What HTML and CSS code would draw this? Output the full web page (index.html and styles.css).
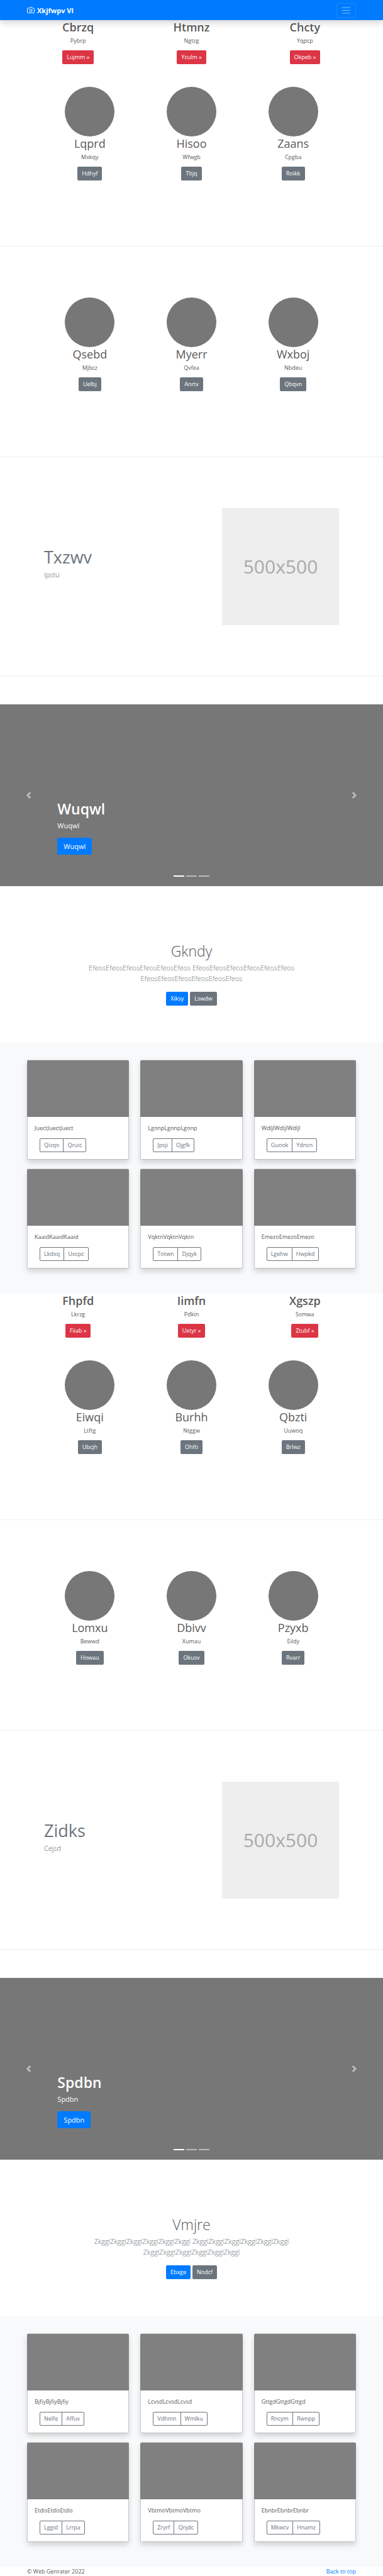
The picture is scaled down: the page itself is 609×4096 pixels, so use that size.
FILE: index.html
```html
<!DOCTYPE html>
<html lang="en">
<head>
<meta charset="utf-8">
<title>Xkjfwpv Vl</title>
<link rel="stylesheet" href="styles.css">
</head>
<body id="top">
<header class="navbar">
  <a class="brand" href="#top">
    <svg class="brand-icon" viewBox="0 0 24 24" aria-hidden="true"><path d="M23 19a2 2 0 0 1-2 2H3a2 2 0 0 1-2-2V8a2 2 0 0 1 2-2h4l2-3h6l2 3h4a2 2 0 0 1 2 2z"/><circle cx="12" cy="13" r="4"/></svg>
    <strong>Xkjfwpv Vl</strong>
  </a>
  <button class="toggler" type="button" aria-label="Toggle navigation">
    <svg class="toggler-icon" viewBox="0 0 30 30" aria-hidden="true"><path d="M4 7h22M4 15h22M4 23h22"/></svg>
  </button>
</header>

<main>
  <section class="block">
    <div class="intro">
      <div class="item"><h2 class="title strong">Cbrzq</h2><p class="text">Pybrp</p><a class="btn danger" href="#">Lujmm »</a></div>
      <div class="item"><h2 class="title strong">Htmnz</h2><p class="text">Ngtzg</p><a class="btn danger" href="#">Yculm »</a></div>
      <div class="item"><h2 class="title strong">Chcty</h2><p class="text">Yqpcp</p><a class="btn danger" href="#">Okpeb »</a></div>
    </div>
    <div class="profiles">
      <div class="item"><div class="avatar"></div><h2 class="title">Lqprd</h2><p class="text">Mxkqy</p><a class="btn secondary" href="#">Hdhyf</a></div>
      <div class="item"><div class="avatar"></div><h2 class="title">Hisoo</h2><p class="text">Wfwgb</p><a class="btn secondary" href="#">Tltjq</a></div>
      <div class="item"><div class="avatar"></div><h2 class="title">Zaans</h2><p class="text">Cpgba</p><a class="btn secondary" href="#">Roikk</a></div>
    </div>
    <hr class="divider">
    <div class="profiles">
      <div class="item"><div class="avatar"></div><h2 class="title">Qsebd</h2><p class="text">Mjbcz</p><a class="btn secondary" href="#">Uelbj</a></div>
      <div class="item"><div class="avatar"></div><h2 class="title">Myerr</h2><p class="text">Qvfea</p><a class="btn secondary" href="#">Anrtv</a></div>
      <div class="item"><div class="avatar"></div><h2 class="title">Wxboj</h2><p class="text">Nbdeu</p><a class="btn secondary" href="#">Qbqvo</a></div>
    </div>
    <hr class="divider">
    <div class="feature">
      <div class="feature-text"><h2 class="feature-title">Txzwv</h2><p class="lead">Ipstu</p></div>
      <div class="placeholder">500x500</div>
    </div>
    <hr class="divider">
    <div class="carousel">
      <div class="caption"><h2 class="caption-title">Wuqwl</h2><p class="caption-text">Wuqwl</p><a class="btn large primary" href="#">Wuqwl</a></div>
      <button class="control prev" type="button" aria-label="Previous"><svg class="arrow" viewBox="0 0 8 8" aria-hidden="true"><path d="M5.250 0l-4 4 4 4 1.500-1.500L4.250 4l2.500-2.500L5.250 0z"/></svg></button>
      <button class="control next" type="button" aria-label="Next"><svg class="arrow" viewBox="0 0 8 8" aria-hidden="true"><path d="M2.750 0l-1.500 1.500L3.750 4l-2.500 2.500L2.750 8l4-4-4-4z"/></svg></button>
      <div class="indicators"><span class="bar active"></span><span class="bar"></span><span class="bar"></span></div>
    </div>
    <div class="jumbotron">
      <h1 class="jumbo-title">Gkndy</h1>
      <p class="lead">EfeosEfeosEfeosEfeosEfeosEfeos EfeosEfeosEfeosEfeosEfeosEfeos EfeosEfeosEfeosEfeosEfeosEfeos</p>
      <div class="actions"><a class="btn primary" href="#">Xiksy</a><a class="btn secondary" href="#">Lswdw</a></div>
    </div>
    <div class="album">
      <article class="card"><div class="card-image"></div><div class="card-body"><p class="text">JuectJuectJuect</p><div class="group"><button class="outline" type="button">Qizqo</button><button class="outline" type="button">Qruic</button></div></div></article>
      <article class="card"><div class="card-image"></div><div class="card-body"><p class="text">LgonpLgonpLgonp</p><div class="group"><button class="outline" type="button">Jpsji</button><button class="outline" type="button">Ojgfk</button></div></div></article>
      <article class="card"><div class="card-image"></div><div class="card-body"><p class="text">WdljlWdljlWdljl</p><div class="group"><button class="outline" type="button">Guook</button><button class="outline" type="button">Ydncn</button></div></div></article>
      <article class="card"><div class="card-image"></div><div class="card-body"><p class="text">KaaidKaaidKaaid</p><div class="group"><button class="outline" type="button">Lkdxq</button><button class="outline" type="button">Uxcpc</button></div></div></article>
      <article class="card"><div class="card-image"></div><div class="card-body"><p class="text">VqktnVqktnVqktn</p><div class="group"><button class="outline" type="button">Totwn</button><button class="outline" type="button">Djqyk</button></div></div></article>
      <article class="card"><div class="card-image"></div><div class="card-body"><p class="text">EmezoEmezoEmezo</p><div class="group"><button class="outline" type="button">Lgehw</button><button class="outline" type="button">Hwpkd</button></div></div></article>
    </div>
  </section>

  <section class="block">
    <div class="intro">
      <div class="item"><h2 class="title strong">Fhpfd</h2><p class="text">Lkrzg</p><a class="btn danger" href="#">Fiiab »</a></div>
      <div class="item"><h2 class="title strong">Iimfn</h2><p class="text">Pdkin</p><a class="btn danger" href="#">Uxtyr »</a></div>
      <div class="item"><h2 class="title strong">Xgszp</h2><p class="text">Ssmwa</p><a class="btn danger" href="#">Ztubf »</a></div>
    </div>
    <div class="profiles">
      <div class="item"><div class="avatar"></div><h2 class="title">Eiwqi</h2><p class="text">Ltftg</p><a class="btn secondary" href="#">Ubcjh</a></div>
      <div class="item"><div class="avatar"></div><h2 class="title">Burhh</h2><p class="text">Ntggw</p><a class="btn secondary" href="#">Ohfti</a></div>
      <div class="item"><div class="avatar"></div><h2 class="title">Qbzti</h2><p class="text">Uuwoq</p><a class="btn secondary" href="#">Brlwz</a></div>
    </div>
    <hr class="divider">
    <div class="profiles">
      <div class="item"><div class="avatar"></div><h2 class="title">Lomxu</h2><p class="text">Bewwd</p><a class="btn secondary" href="#">Howau</a></div>
      <div class="item"><div class="avatar"></div><h2 class="title">Dbivv</h2><p class="text">Xumau</p><a class="btn secondary" href="#">Okusv</a></div>
      <div class="item"><div class="avatar"></div><h2 class="title">Pzyxb</h2><p class="text">Eildy</p><a class="btn secondary" href="#">Rvarr</a></div>
    </div>
    <hr class="divider">
    <div class="feature">
      <div class="feature-text"><h2 class="feature-title">Zidks</h2><p class="lead">Cejsd</p></div>
      <div class="placeholder">500x500</div>
    </div>
    <hr class="divider">
    <div class="carousel">
      <div class="caption"><h2 class="caption-title">Spdbn</h2><p class="caption-text">Spdbn</p><a class="btn large primary" href="#">Spdbn</a></div>
      <button class="control prev" type="button" aria-label="Previous"><svg class="arrow" viewBox="0 0 8 8" aria-hidden="true"><path d="M5.250 0l-4 4 4 4 1.500-1.500L4.250 4l2.500-2.500L5.250 0z"/></svg></button>
      <button class="control next" type="button" aria-label="Next"><svg class="arrow" viewBox="0 0 8 8" aria-hidden="true"><path d="M2.750 0l-1.500 1.500L3.750 4l-2.500 2.500L2.750 8l4-4-4-4z"/></svg></button>
      <div class="indicators"><span class="bar active"></span><span class="bar"></span><span class="bar"></span></div>
    </div>
    <div class="jumbotron">
      <h1 class="jumbo-title">Vmjre</h1>
      <p class="lead">ZkgglZkgglZkgglZkgglZkgglZkggl ZkgglZkgglZkgglZkgglZkgglZkggl ZkgglZkgglZkgglZkgglZkgglZkggl</p>
      <div class="actions"><a class="btn primary" href="#">Ebxge</a><a class="btn secondary" href="#">Nodcf</a></div>
    </div>
    <div class="album">
      <article class="card"><div class="card-image"></div><div class="card-body"><p class="text">BjfiyBjfiyBjfiy</p><div class="group"><button class="outline" type="button">Nelfe</button><button class="outline" type="button">Affuv</button></div></div></article>
      <article class="card"><div class="card-image"></div><div class="card-body"><p class="text">LcvsdLcvsdLcvsd</p><div class="group"><button class="outline" type="button">Vdhmn</button><button class="outline" type="button">Wmlku</button></div></div></article>
      <article class="card"><div class="card-image"></div><div class="card-body"><p class="text">GttgdGttgdGttgd</p><div class="group"><button class="outline" type="button">Rncym</button><button class="outline" type="button">Rwnpp</button></div></div></article>
      <article class="card"><div class="card-image"></div><div class="card-body"><p class="text">EtdisEtdisEtdis</p><div class="group"><button class="outline" type="button">Lggid</button><button class="outline" type="button">Lrrpa</button></div></div></article>
      <article class="card"><div class="card-image"></div><div class="card-body"><p class="text">VbtmoVbtmoVbtmo</p><div class="group"><button class="outline" type="button">Zryrf</button><button class="outline" type="button">Qnjdc</button></div></div></article>
      <article class="card"><div class="card-image"></div><div class="card-body"><p class="text">EbnbrEbnbrEbnbr</p><div class="group"><button class="outline" type="button">Mkwcv</button><button class="outline" type="button">Hnamz</button></div></div></article>
    </div>
  </section>
</main>

<footer class="footer"><span>© Web Genrater 2022</span><a class="top-link" href="#top">Back to top</a></footer>
</body>
</html>
```
FILE: styles.css
```css
* { box-sizing: border-box; }
body {
  margin: 0;
  background: #fff;
  color: #5a5a5a;
  font-family: "Open Sans", "Noto Sans", sans-serif;
  font-size: 9px;
  line-height: 14px;
}
h1, h2, p { margin: 0; }
button { font-family: inherit; margin: 0; cursor: pointer; }
a { text-decoration: none; }

.navbar {
  position: sticky;
  top: 0;
  z-index: 10;
  display: flex;
  align-items: center;
  justify-content: space-between;
  height: 32px;
  padding: 0 43px;
  background: #007bff;
  box-shadow: 0 5px 9px rgba(0, 0, 0, .15);
}
.brand { display: flex; align-items: center; gap: 4px; color: #fff; font-size: 11px; line-height: 17px; }
.brand-icon { width: 12px; height: 12px; fill: none; stroke: #fff; stroke-width: 2; stroke-linecap: round; stroke-linejoin: round; }
.toggler { display: flex; padding: 2px 6px; background: none; border: 1px solid rgba(255, 255, 255, .1); border-radius: 2px; }
.toggler-icon { width: 17px; height: 17px; fill: none; stroke: rgba(255, 255, 255, .5); stroke-width: 2; stroke-linecap: round; }

.intro, .profiles { display: grid; grid-template-columns: repeat(3, 1fr); }
.intro { padding: 0 34px 36px; }
.profiles { padding: 0 62px 104px; }
.item { display: flex; flex-direction: column; align-items: center; }
.avatar { width: 79px; height: 79px; border-radius: 50%; background: #777; }
.title { margin-bottom: 4px; font-size: 18px; line-height: 22px; font-weight: 400; }
.title.strong { font-weight: 600; }
.item .text { margin-bottom: 8px; }

.btn {
  display: inline-block;
  padding: 3px 6px;
  border: 1px solid transparent;
  border-radius: 2px;
  color: #fff;
}
.btn.large { padding: 4px 9px; border-radius: 3px; font-size: 11px; line-height: 17px; }
.primary { background: #007bff; }
.secondary { background: #6c757d; }
.danger { background: #dc3545; }

.divider { margin: 0 0 81px; border: 0; border-top: 1px solid #eee; }
.feature + .divider { margin-bottom: 45px; }

.feature { display: flex; align-items: center; justify-content: space-between; padding: 0 70px 80px; }
.feature-title { margin-bottom: 2px; color: #6c757d; font-size: 27px; line-height: 34px; font-weight: 400; }
.feature .lead { margin-bottom: 11px; }
.lead { font-size: 11px; line-height: 17px; font-weight: 300; }
.placeholder {
  display: flex;
  align-items: center;
  justify-content: center;
  width: 186px;
  aspect-ratio: 1;
  background: #eee;
  color: #aaa;
  font-size: 30px;
  line-height: 36px;
}

.carousel { position: relative; display: flex; align-items: flex-end; min-height: 289px; padding: 0 15% 50px; background: #777; color: #fff; }
.caption-title { margin-bottom: 4px; font-size: 23px; line-height: 27px; font-weight: 600; }
.caption-text { margin-bottom: 11px; font-size: 11px; line-height: 17px; }
.control { position: absolute; top: 0; bottom: 0; display: flex; align-items: center; justify-content: center; width: 15%; padding: 0; border: 0; background: none; opacity: .5; }
.prev { left: 0; }
.next { right: 0; }
.arrow { width: 11px; height: 11px; fill: #fff; }
.indicators { position: absolute; left: 0; right: 0; bottom: 15px; display: flex; justify-content: center; gap: 3px; }
.bar { width: 17px; height: 2px; background: #fff; opacity: .5; }
.bar.active { opacity: 1; }

.jumbotron { padding: 90px 130px 59px; text-align: center; }
.jumbo-title { margin-bottom: 4px; font-size: 23px; line-height: 27px; font-weight: 300; }
.jumbotron .lead { margin-bottom: 13px; color: #6c757d; }
.actions { display: flex; justify-content: center; gap: 3px; }

.album { display: grid; grid-template-columns: repeat(3, 1fr); gap: 14px 18px; padding: 27px 43px 40px; background: #f8f9fa; }
.card { background: #fff; border: 1px solid rgba(0, 0, 0, .125); border-radius: 2px; box-shadow: 0 5px 9px rgba(0, 0, 0, .15); background-clip: padding-box; }
.card-image { height: 90px; margin: 0 -1px; border-radius: 2px 2px 0 0; background: #808080; }
.card-body { padding: 11px; }
.card-body .text { margin-bottom: 9px; }
.group { display: flex; padding-left: 8px; }
.outline { padding: 3px 6px; border: 1px solid #6c757d; background: none; color: #6c757d; font-size: 9px; line-height: 14px; }
.outline:first-child { border-radius: 2px 0 0 2px; }
.outline:last-child { margin-left: -1px; border-radius: 0 2px 2px 0; }

.footer { display: flex; justify-content: space-between; padding: 0 43px; }
.top-link { color: #007bff; }
```
